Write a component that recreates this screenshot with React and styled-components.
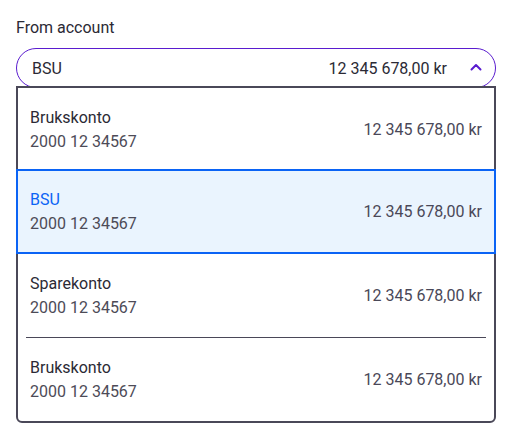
import React from 'react'
import styled, { createGlobalStyle } from 'styled-components'

const GlobalStyle = createGlobalStyle`
  body {
    margin: 0;
    background: #ffffff;
    font-family: Roboto, "Liberation Sans", sans-serif;
  }
`

const accounts = [
  { name: 'Brukskonto', number: '2000 12 34567', amount: '12 345 678,00 kr' },
  { name: 'BSU', number: '2000 12 34567', amount: '12 345 678,00 kr' },
  { name: 'Sparekonto', number: '2000 12 34567', amount: '12 345 678,00 kr' },
  { name: 'Brukskonto', number: '2000 12 34567', amount: '12 345 678,00 kr' },
]

const selectedIndex = 1

function Chevron() {
  return (
    <svg width="12" height="8" viewBox="0 0 12 8" fill="none">
      <polyline points="1.5,6.5 6,2 10.5,6.5" stroke="#5a1ccf" strokeWidth="2" strokeLinecap="round" strokeLinejoin="round" />
    </svg>
  )
}

function App() {
  return (
    <>
      <GlobalStyle />
      <Page>
        <Label>From account</Label>
        <Field>
          <Select>
            <SelectValue>BSU</SelectValue>
            <SelectAmount>12 345 678,00 kr</SelectAmount>
            <ChevronBox>
              <Chevron />
            </ChevronBox>
          </Select>
          <Listbox>
            {accounts.map((a, i) => {
              const showDivider = i > 0 && i !== selectedIndex && i - 1 !== selectedIndex
              return (
                <React.Fragment key={i}>
                  {showDivider && <Divider />}
                  <AccountOption $selected={i === selectedIndex}>
                    <OptionText>
                      <OptionName $selected={i === selectedIndex}>{a.name}</OptionName>
                      <OptionNumber>{a.number}</OptionNumber>
                    </OptionText>
                    <OptionAmount>{a.amount}</OptionAmount>
                  </AccountOption>
                </React.Fragment>
              )
            })}
          </Listbox>
        </Field>
      </Page>
    </>
  )
}

const Page = styled.div`
  padding: 16px;
  display: flex;
  flex-direction: column;
  gap: 8px;
  width: 480px;
`

const Label = styled.div`
  font-size: 16px;
  line-height: 24px;
  color: #2b2a35;
`

const Field = styled.div`
  display: flex;
  flex-direction: column;
`

const Select = styled.div`
  box-sizing: border-box;
  height: 40px;
  border: 1px solid #5a1ccf;
  border-radius: 20px;
  display: flex;
  align-items: center;
  padding: 0 7px 0 15px;
  color: #2b2a35;
  font-size: 16px;
`

const SelectValue = styled.span`
  flex: 1;
`

const SelectAmount = styled.span`
  margin-right: 17px;
`

const ChevronBox = styled.span`
  width: 24px;
  height: 24px;
  display: flex;
  align-items: center;
  justify-content: center;
  margin-top: -2px;
`

const Listbox = styled.div`
  position: relative;
  z-index: 1;
  margin-top: -2px;
  background: #ffffff;
  border: 2px solid #4a4858;
  border-radius: 0 0 6px 6px;
  display: flex;
  flex-direction: column;
`

const AccountOption = styled.div`
  box-sizing: border-box;
  height: 83px;
  flex-shrink: 0;
  display: flex;
  align-items: center;
  justify-content: space-between;
  padding: 0 12px;
  font-size: 16px;
  ${p => p.$selected && `
    margin: -2px -2px 0;
    height: 85px;
    border: 2px solid #0a63f5;
    background: #eaf4fe;
  `}
`

const OptionText = styled.div`
  display: flex;
  flex-direction: column;
  line-height: 24px;
`

const OptionName = styled.span`
  color: ${p => (p.$selected ? '#0a63f5' : '#2b2a35')};
`

const OptionNumber = styled.span`
  color: #4d4b57;
`

const OptionAmount = styled.span`
  color: #4a4858;
`

const Divider = styled.div`
  height: 1px;
  flex-shrink: 0;
  margin: 0 8px;
  background: #4a4858;
`

export default App
